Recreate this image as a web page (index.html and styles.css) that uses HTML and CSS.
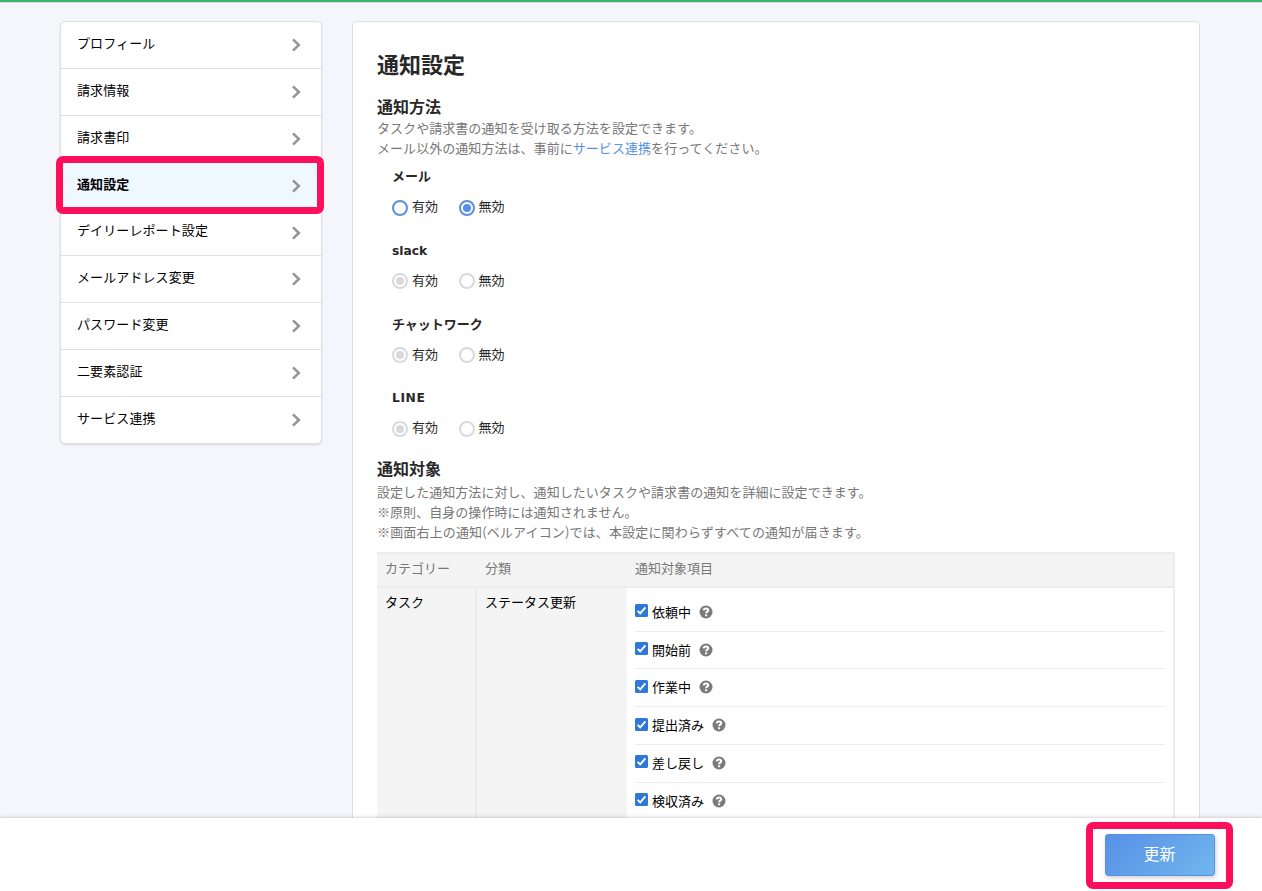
FILE: index.html
```
<!DOCTYPE html>
<html lang="ja">
<head>
<meta charset="utf-8">
<title>通知設定</title>
<link rel="stylesheet" href="styles.css">
</head>
<body>
<svg class="defs" width="0" height="0">
  <symbol id="chevron" viewBox="0 0 10 14"><path d="M2 1.300 7.900 7l-5.900 5.700" fill="none" stroke="#949494" stroke-width="2.500"/></symbol>
  <symbol id="help" viewBox="0 0 14 14"><circle cx="7" cy="7" r="6.500" fill="#7b7b7b"/><path d="M4.700 5.400C4.900 4 5.900 3.600 7 3.600c1.300 0 2.200.7 2.200 1.700 0 1.400-2.100 1.400-2.100 3" fill="none" stroke="#fff" stroke-width="2"/><rect x="6.100" y="9.300" width="2" height="1.900" fill="#fff"/></symbol>
  <symbol id="check" viewBox="0 0 13 13"><rect width="13" height="13" rx="1.500" fill="#2d78d8"/><path d="M2.600 6.800 5.200 9.400 10.400 3.300" fill="none" stroke="#fff" stroke-width="1.900"/></symbol>
</svg>
<div class="page">
  <nav class="sidebar">
    <a class="nav-item"><span>プロフィール</span><svg class="chevron"><use href="#chevron"/></svg></a>
    <a class="nav-item"><span>請求情報</span><svg class="chevron"><use href="#chevron"/></svg></a>
    <a class="nav-item"><span>請求書印</span><svg class="chevron"><use href="#chevron"/></svg></a>
    <a class="nav-item active"><span>通知設定</span><svg class="chevron"><use href="#chevron"/></svg></a>
    <a class="nav-item"><span>デイリーレポート設定</span><svg class="chevron"><use href="#chevron"/></svg></a>
    <a class="nav-item"><span>メールアドレス変更</span><svg class="chevron"><use href="#chevron"/></svg></a>
    <a class="nav-item"><span>パスワード変更</span><svg class="chevron"><use href="#chevron"/></svg></a>
    <a class="nav-item"><span>二要素認証</span><svg class="chevron"><use href="#chevron"/></svg></a>
    <a class="nav-item"><span>サービス連携</span><svg class="chevron"><use href="#chevron"/></svg></a>
  </nav>
  <main class="card">
    <h1>通知設定</h1>
    <h2>通知方法</h2>
    <p class="desc">タスクや請求書の通知を受け取る方法を設定できます。<br>メール以外の通知方法は、事前に<a>サービス連携</a>を行ってください。</p>
    <div class="methods">
      <section class="method"><h3>メール</h3><div class="radios"><label><i class="radio"></i>有効</label><label><i class="radio on"></i>無効</label></div></section>
      <section class="method off"><h3 class="latin">slack</h3><div class="radios"><label><i class="radio on"></i>有効</label><label><i class="radio"></i>無効</label></div></section>
      <section class="method off"><h3>チャットワーク</h3><div class="radios"><label><i class="radio on"></i>有効</label><label><i class="radio"></i>無効</label></div></section>
      <section class="method off"><h3 class="latin caps">LINE</h3><div class="radios"><label><i class="radio on"></i>有効</label><label><i class="radio"></i>無効</label></div></section>
    </div>
    <h2>通知対象</h2>
    <p class="desc notes">設定した通知方法に対し、通知したいタスクや請求書の通知を詳細に設定できます。<br>※原則、自身の操作時には通知されません。<br><span class="wide">※画面右上の通知(ベルアイコン)では、本設定に関わらずすべての通知が届きます。</span></p>
    <div class="table">
      <div class="row head"><div>カテゴリー</div><div>分類</div><div>通知対象項目</div></div>
      <div class="row body">
        <div class="category">タスク</div>
        <div class="kind">ステータス更新</div>
        <div class="targets">
          <div class="target"><svg class="check"><use href="#check"/></svg><span>依頼中</span><svg class="help"><use href="#help"/></svg></div>
          <div class="target"><svg class="check"><use href="#check"/></svg><span>開始前</span><svg class="help"><use href="#help"/></svg></div>
          <div class="target"><svg class="check"><use href="#check"/></svg><span>作業中</span><svg class="help"><use href="#help"/></svg></div>
          <div class="target"><svg class="check"><use href="#check"/></svg><span>提出済み</span><svg class="help"><use href="#help"/></svg></div>
          <div class="target"><svg class="check"><use href="#check"/></svg><span>差し戻し</span><svg class="help"><use href="#help"/></svg></div>
          <div class="target"><svg class="check"><use href="#check"/></svg><span>検収済み</span><svg class="help"><use href="#help"/></svg></div>
        </div>
      </div>
    </div>
  </main>
</div>
<footer class="footer"><div class="submit"><button>更新</button></div></footer>
</body>
</html>
```
FILE: styles.css
```
* { box-sizing: border-box; }
body {
  margin: 0;
  height: 891px;
  overflow: hidden;
  display: flex;
  flex-direction: column;
  background: #f4f6fb;
  border-top: 2px solid #3cb36b;
  color: #000;
  font: 13px/20px "Noto Sans CJK JP", sans-serif;
}
.defs { position: absolute; }
h1, h2, h3, p { margin: 0; color: #282828; }
.page {
  flex: 1;
  min-height: 0;
  overflow: hidden;
  display: flex;
  align-items: flex-start;
  gap: 30px;
  padding: 19px 62px 0 60px;
  box-shadow: inset 0 2px 1px -1px #dadbe0;
}
.sidebar {
  width: 262px;
  border: 1px solid #dedfe0;
  border-radius: 5px;
  background: #fff;
  box-shadow: 0 1px 2px rgba(0, 0, 0, .12);
}
.nav-item {
  position: relative;
  display: flex;
  align-items: center;
  justify-content: space-between;
  height: 46.9px;
  padding: 0 20px 0 16px;
  border-bottom: 1px solid #dedfe0;
}
.nav-item:last-child { border-bottom: 0; height: 46px; }
.nav-item span { padding-bottom: 4.3px; letter-spacing: .1px; }
.chevron { width: 10px; height: 14px; }
.active { background: #eff7ff; font-weight: 700; }
.active span { padding-bottom: 3.5px; }
.active::after {
  content: "";
  position: absolute;
  inset: -7px -3px -5px -5px;
  z-index: 1;
  border: 7px solid #ff0f5b;
  border-radius: 7px;
}
.card {
  width: 848px;
  height: 1000px;
  padding: 25px 24px 0;
  border: 1px solid #dedfe0;
  border-radius: 5px;
  background: #fff;
}
h1 { font-size: 22px; line-height: 32px; }
h2 { font-size: 16px; line-height: 22px; }
h1 + h2 { margin-top: 16px; }
.desc { color: #777; line-height: 19.5px; margin-top: 1px; letter-spacing: .05px; }
.desc a { color: #5790e6; }
.wide { letter-spacing: .15px; }
.methods { padding: 9px 0 0 15px; }
.method { height: 73.8px; }
h3 { font-size: 13px; line-height: 20px; }
.latin { height: 20px; font-family: "DejaVu Sans", sans-serif; font-size: 12.3px; line-height: 22px; }
.caps { letter-spacing: .6px; line-height: 23px; }
.radios { display: flex; gap: 20.5px; margin-top: 10px; color: #282828; }
.radios label { display: flex; align-items: center; gap: 4px; }
.radio {
  display: grid;
  place-items: center;
  width: 16px;
  height: 16px;
  margin-top: 3px;
  border: 2px solid #5790e6;
  border-radius: 50%;
  color: #5790e6;
}
.radio.on::before { content: ""; width: 8px; height: 8px; border-radius: 50%; background: currentColor; }
.off .radio { border-color: #d8d9db; color: #d8d9db; }
.methods + h2 { margin-top: -4px; }
.notes { line-height: 20px; margin-top: 3px; }
.table { margin-top: 9.7px; border: solid #ececec; border-width: 2px 2px 0 0; }
.row { display: grid; grid-template-columns: 100px 150px 1fr; }
.head { height: 34px; background: #f4f4f4; border-bottom: 2px solid #ececec; color: #777; line-height: 28px; }
.head > div { padding-left: 8px; }
.category, .kind { background: #f4f4f4; padding: 4px 8px; }
.category { border-right: 2px solid #ececec; }
.targets { padding: 6px 8px; }
.target { display: flex; align-items: center; height: 37.8px; border-bottom: 1px solid #ececec; }
.target span { margin: -1px 8px 0 4px; }
.check { width: 13px; height: 13px; margin-bottom: 3px; }
.help { width: 14px; height: 14px; margin-bottom: 1px; }
.footer {
  position: relative;
  display: flex;
  justify-content: flex-end;
  height: 73px;
  padding: 4px 29px 0;
  background: #fff;
  box-shadow: 0 0 4px rgba(0, 0, 0, .25);
}
.submit { width: 147px; height: 67px; padding: 5px 11px 0 12px; border: 7px solid #ff0f5b; border-radius: 7px; }
button {
  display: block;
  width: 110px;
  height: 42px;
  padding: 0 1px 4px 0;
  border: 1px solid #5790e6;
  border-radius: 3px;
  background: linear-gradient(135deg, #5790e6, #70b7ed);
  box-shadow: 1px 2px 4px rgba(0, 0, 0, .18);
  color: #fff;
  font: 16px/24px "Noto Sans CJK JP", sans-serif;
}
```
